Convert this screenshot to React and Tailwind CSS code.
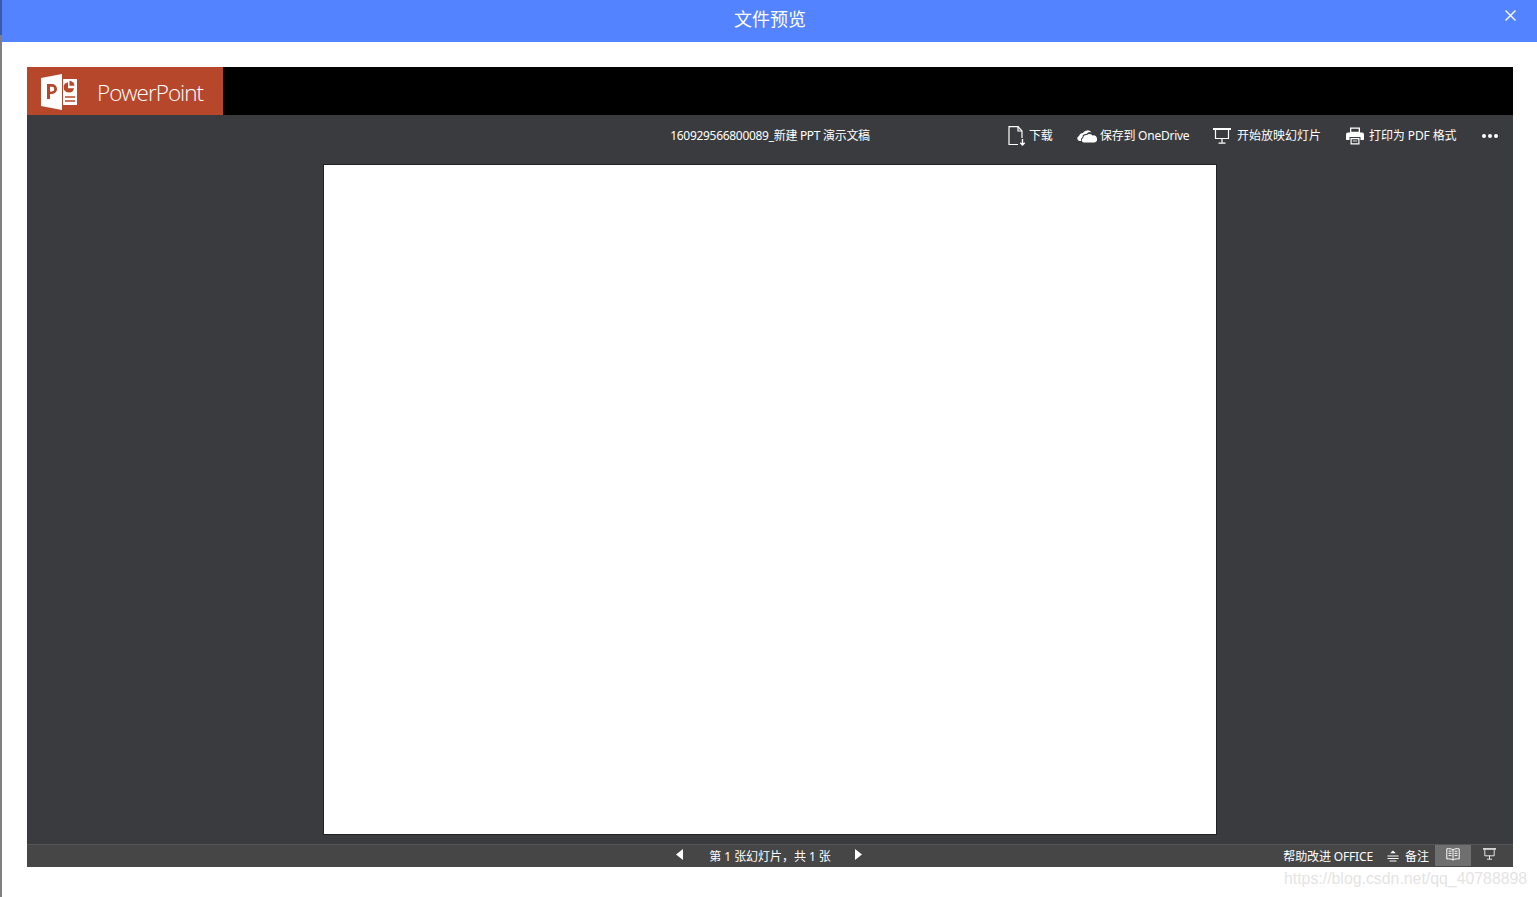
const uiFont = "font-['Noto_Sans','Noto_Sans_CJK_SC',sans-serif]"

const PptLogo = () => (
  <svg className="mt-[3px]" width="37" height="37" viewBox="0 0 37 37" fill="none">
    <path d="M0 4 L21 0 V36 L0 32 Z" fill="#fff" />
    <path d="M6 10 h5 a5 5 0 0 1 0 10 H9 V25 H6 Z M9 12.8 v4.6 h2 a2.3 2.3 0 0 0 0 -4.6 Z" fill="#b7472a" fillRule="evenodd" />
    <path d="M22 5 H36 V31 H22 Z" fill="#fff" />
    <path d="M27 8.2 a5.2 5.2 0 1 0 6 6 h-6 Z" fill="#b7472a" />
    <path d="M28.5 6.8 a5.2 5.2 0 0 1 5 5 h-5 Z" fill="#b7472a" />
    <path d="M24 23 H34 M24 27 H34" stroke="#b7472a" strokeWidth="1.6" />
  </svg>
)

const DownloadIcon = () => (
  <svg width="18" height="20" viewBox="0 0 18 20" fill="none" stroke="#fff" strokeWidth="1.2">
    <path d="M10 18.5 H1 V0.6 H10 L14 5 V12" />
    <path d="M10 0.6 V5 H14" />
    <path d="M14.5 13 V19 M12.3 16.8 L14.5 19 L16.7 16.8" strokeWidth="1.4" />
  </svg>
)

const CloudIcon = () => (
  <svg width="20" height="14" viewBox="0 0 20 14" fill="#fff">
    <path d="M2.5 12 A2.6 2.6 0 0 1 2 7 A4.4 4.4 0 0 1 6 4 A5 5 0 0 1 14.5 3.5 A3.6 3.6 0 0 0 9.5 5 A3.2 3.2 0 0 0 5.5 8.2 A2.5 2.5 0 0 0 4.5 12 Z" />
    <path d="M6.5 13.5 A2.4 2.4 0 0 1 6.3 9 A3 3 0 0 1 10 6 A3.6 3.6 0 0 1 15.5 6.5 A3.6 3.6 0 0 1 17.5 13.5 Z" />
  </svg>
)

const ScreenIcon = ({ w = 18, h = 16 }) => (
  <svg width={w} height={h} viewBox="0 0 18 16" fill="none" stroke="#fff" strokeWidth="1.2">
    <path d="M0 1 H18" strokeWidth="2" />
    <path d="M2.5 2 V10.5 H15.5 V2" />
    <path d="M9 10.5 V15 M5.5 15.2 H12.5" />
  </svg>
)

const PrinterIcon = () => (
  <svg width="18" height="18" viewBox="0 0 18 18" fill="#fff">
    <path d="M4 0.5 H14 V6 H4 Z M5.3 1.8 V4.8 H12.7 V1.8 Z" fillRule="evenodd" />
    <path d="M2 5.5 H16 A2 2 0 0 1 18 7.5 V12.5 A1.5 1.5 0 0 1 16.5 13 H14.5 V10 H3.5 V13 H1.5 A1.5 1.5 0 0 1 0 12.5 V7.5 A2 2 0 0 1 2 5.5 Z" />
    <path d="M4.5 11 H13.5 V17.5 H4.5 Z M5.7 12.2 V16.3 H12.3 V12.2 Z" fillRule="evenodd" />
    <path d="M6.8 13.6 H11.2 V14.4 H6.8 Z" />
  </svg>
)

const NotesIcon = () => (
  <svg width="12" height="12" viewBox="0 0 12 12" fill="#fff">
    <path d="M6 0.5 L8.8 3.3 H3.2 Z" />
    <path d="M0.5 6 H11.5 M0.5 8.5 H11.5 M2.5 11 H9.5" stroke="#fff" strokeWidth="1" />
  </svg>
)

const BookIcon = () => (
  <svg width="14" height="13" viewBox="0 0 14 13" fill="none" stroke="#fff" strokeWidth="1">
    <path d="M7 1.8 C5 0.6 3 0.5 0.8 0.8 V11 C3 10.7 5 10.8 7 12 C9 10.8 11 10.7 13.2 11 V0.8 C11 0.5 9 0.6 7 1.8 Z" />
    <path d="M7 2 V12 M2.5 3.2 H5.5 M2.5 5.4 H5.5 M2.5 7.6 H5.5 M8.5 3.2 H11.5 M8.5 5.4 H11.5 M8.5 7.6 H11.5" />
  </svg>
)

const toolbarActions = [
  { label: '下载', icon: <DownloadIcon />, cls: 'w-[46px] gap-[3px] tracking-[-0.3px]' },
  { label: '保存到 OneDrive', icon: <CloudIcon />, cls: 'w-[113px] gap-[3px] tracking-[-0.25px]' },
  { label: '开始放映幻灯片', icon: <ScreenIcon />, cls: 'w-[110px] gap-[6px] tracking-[0px]' },
  { label: '打印为 PDF 格式', icon: <PrinterIcon />, cls: 'w-[113px] gap-[5px] tracking-[-0.1px]' },
]

const App = () => {
  return (
    <div className={`relative flex h-[897px] w-[1537px] overflow-hidden bg-white ${uiFont}`}>
      {/* left edge of the window behind the dialog */}
      <div className="flex w-[2px] shrink-0 flex-col">
        <div className="h-[35px] bg-[#3b5aa8]" />
        <div className="flex-1 bg-[#7f7f7f]" />
      </div>

      <div className="flex min-w-0 flex-1 flex-col">
        {/* Dialog header */}
        <div className="relative flex h-[42px] shrink-0 items-center justify-center bg-[#5383fe] pb-[4px]">
          <span className="pl-[1px] text-[18px] leading-[38px] text-white">文件预览</span>
          <button className="absolute right-[20px] top-[9px] flex h-[12px] w-[13px] items-center justify-center">
            <svg width="11" height="11" viewBox="0 0 11 11" stroke="#fff" strokeWidth="1.4">
              <path d="M0.5 0.5 L10.5 10.5 M10.5 0.5 L0.5 10.5" />
            </svg>
          </button>
        </div>

        {/* Viewer */}
        <div className="flex h-[800px] flex-col pl-[25px] pr-[24px] pt-[25px]">
          <div className="flex h-[48px] shrink-0 bg-black">
            <div className="flex w-[196px] items-center bg-[#b7472a] pl-[14px]">
              <PptLogo />
              <span className="ml-[19px] pt-[5px] font-['Open_Sans',sans-serif] text-[22.5px] font-light leading-none tracking-[-1px] text-white">PowerPoint</span>
            </div>
          </div>

          <div className="flex h-[729px] shrink-0 flex-col bg-[#3a3b3e]">
            <div className="grid h-[49px] shrink-0 grid-cols-[1fr_auto_1fr] items-center pb-[7px]">
              <div />
              <span className="text-[12px] tracking-[-0.3px] text-white">160929566800089_新建 PPT 演示文稿</span>
              <div className="flex items-center justify-end pr-[15px]">
                {toolbarActions.map((action) => (
                  <div key={action.label} className={`mr-[23px] flex items-center whitespace-nowrap text-[12px] text-white ${action.cls}`}>
                    {action.icon}
                    <span>{action.label}</span>
                  </div>
                ))}
                <div className="flex gap-[2px]">
                  <span className="h-[4px] w-[4px] rounded-full bg-white" />
                  <span className="h-[4px] w-[4px] rounded-full bg-white" />
                  <span className="h-[4px] w-[4px] rounded-full bg-white" />
                </div>
              </div>
            </div>
            <div className="flex flex-1 justify-center">
              <div className="h-[671px] w-[894px] border border-[#222] bg-white" />
            </div>
            <div className="h-[9px] shrink-0" />
          </div>

          {/* Status bar */}
          <div className="relative grid h-[23px] shrink-0 grid-cols-[1fr_auto_1fr] items-center border-t border-[#555] bg-[#464646] pb-[1px] text-[12px] text-white">
            <div />
            <div className="flex items-center pr-[2px]">
              <svg className="mb-[3px]" width="7" height="11" viewBox="0 0 7 11" fill="#fff"><path d="M7 0 V11 L0 5.5 Z" /></svg>
              <span className="ml-[26px] mr-[24px] whitespace-nowrap pt-[3px] tracking-[-0.05px]">第 1 张幻灯片，共 1 张</span>
              <svg className="mb-[3px]" width="7" height="11" viewBox="0 0 7 11" fill="#fff"><path d="M0 0 V11 L7 5.5 Z" /></svg>
            </div>
            <div className="flex h-full items-center justify-end pr-[6px]">
              <span className="whitespace-nowrap pt-[3px] tracking-[-0.15px]">帮助改进 OFFICE</span>
              <span className="ml-[14px]"><NotesIcon /></span>
              <span className="ml-[6px] whitespace-nowrap pt-[3px]">备注</span>
              <div className="ml-[6px] flex h-full w-[36px] items-center justify-center bg-[#6f6f6f] pb-[3px]"><BookIcon /></div>
              <div className="flex h-full w-[36px] items-center justify-center pb-[3px]"><ScreenIcon w={13} h={12} /></div>
            </div>
          </div>
        </div>
      </div>

      {/* csdn watermark */}
      <span className="absolute left-[1284px] top-[868px] whitespace-nowrap font-['Liberation_Sans',sans-serif] text-[15.85px] leading-[22px] text-[#e4e4e4]">https://blog.csdn.net/qq_40788898</span>
    </div>
  )
}

export default App
